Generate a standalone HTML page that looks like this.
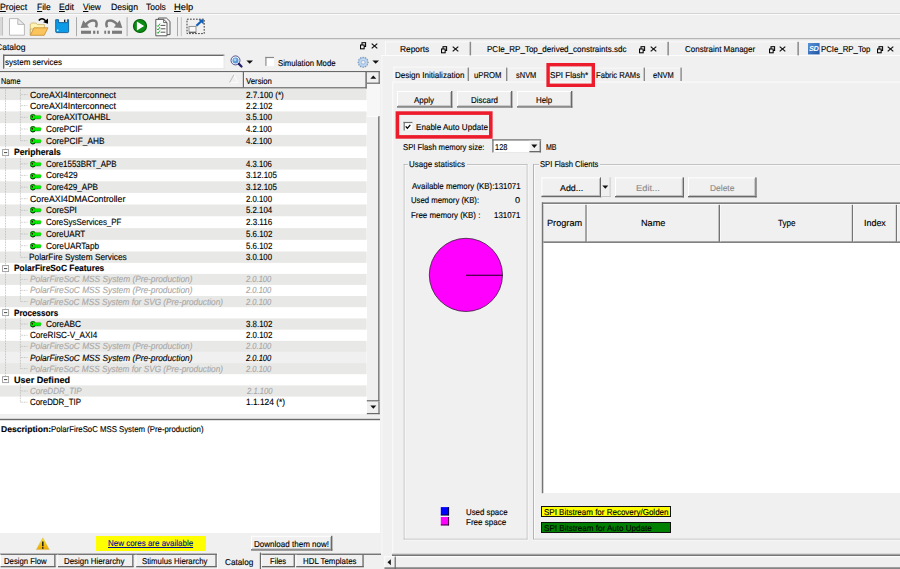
<!DOCTYPE html>
<html lang="en"><head><meta charset="utf-8"><title>Libero Catalog - SPI Flash</title>
<style>
html,body{margin:0;padding:0;}
body{width:900px;height:569px;overflow:hidden;background:#f0f0f0;position:relative;font-family:"Liberation Sans", sans-serif;}
div,span.t,svg{position:absolute;box-sizing:border-box;}
span.t{white-space:pre;display:block;text-rendering:geometricPrecision;-webkit-text-stroke:0.14px currentColor;}
u{text-decoration:underline;text-underline-offset:1px;text-decoration-thickness:1px;}
</style></head>
<body>
<span class="t" style="left:0.3px;top:0.7px;font-size:9.0px;line-height:12px;color:#000;transform:scaleX(0.9671);transform-origin:0 0;"><u>P</u>roject</span>
<span class="t" style="left:36.5px;top:0.7px;font-size:9.0px;line-height:12px;color:#000;transform:scaleX(0.9448);transform-origin:0 0;"><u>F</u>ile</span>
<span class="t" style="left:59.0px;top:0.7px;font-size:9.0px;line-height:12px;color:#000;transform:scaleX(0.9664);transform-origin:0 0;"><u>E</u>dit</span>
<span class="t" style="left:83.0px;top:0.7px;font-size:9.0px;line-height:12px;color:#000;transform:scaleX(0.9231);transform-origin:0 0;"><u>V</u>iew</span>
<span class="t" style="left:110.5px;top:0.7px;font-size:9.0px;line-height:12px;color:#000;transform:scaleX(0.9627);transform-origin:0 0;">Design</span>
<span class="t" style="left:146.3px;top:0.7px;font-size:9.0px;line-height:12px;color:#000;transform:scaleX(0.9398);transform-origin:0 0;">Tools</span>
<span class="t" style="left:174.25px;top:0.7px;font-size:9.0px;line-height:12px;color:#000;transform:scaleX(1.0372);transform-origin:0 0;"><u>H</u>elp</span>
<svg style="left:0;top:0" width="900" height="569"><rect x="0" y="13" width="900" height="1" fill="#d4d4d4"/><rect x="0" y="14" width="900" height="1" fill="#fbfbfb"/><rect x="0" y="38" width="900" height="1" fill="#b4b4b4"/><rect x="0" y="39" width="900" height="1" fill="#e2e2e2"/><rect x="0.6" y="17" width="0.8" height="18.6" fill="#b4b4b4"/><rect x="2" y="17" width="0.8" height="18.6" fill="#b4b4b4"/></svg>
<svg style="left:8.5px;top:17.5px;" width="17" height="18" viewBox="0 0 17 18"><path d="M0.5 0.6 H8.8 L15.4 6.4 V17.2 H0.5 Z" fill="#fff" stroke="#b2b2b2" stroke-width="0.9"/><path d="M8.8 0.6 V6.4 H15.4 Z" fill="#ededed" stroke="#b2b2b2" stroke-width="0.9" stroke-linejoin="round"/></svg>
<svg style="left:29px;top:16px;" width="21" height="21" viewBox="0 0 21 21"><path d="M1.3 19 V8 L2.6 7 H7 L8.4 8.6 H15.4 V13 H1.3 Z" fill="#fdf3b4" stroke="#cbb068" stroke-width="0.8"/>
<path d="M1.3 19.3 L5 11.8 H19 L15.2 19.3 Z" fill="#fcc45c" stroke="#c48a30" stroke-width="0.8" stroke-linejoin="round"/>
<path d="M9.8 4.6 Q12.8 0.8 16.6 4.8" fill="none" stroke="#000" stroke-width="1.6"/>
<path d="M19 2.6 V7.7 L14.2 6.3 Z" fill="#000"/></svg>
<svg style="left:55px;top:19.4px;" width="15" height="15" viewBox="0 0 15 15"><path d="M0.7 0.7 H3.6 V3.6 H12.4 V0.7 H13.6 V12.6 Q13.6 13.6 12.6 13.6 H1.7 Q0.7 13.6 0.7 12.6 Z" fill="#0c9be6" stroke="#0f5c98" stroke-width="0.9" stroke-linejoin="round"/>
<rect x="9" y="0.6" width="1.4" height="2.4" fill="#222"/>
<rect x="1.9" y="10.6" width="1.5" height="1.5" fill="#fff"/></svg>
<svg style="left:0;top:0" width="900" height="569"><rect x="76" y="17.2" width="1" height="19" fill="#aaaaaa"/></svg>
<svg style="left:80px;top:18px;" width="20" height="17" viewBox="0 0 20 17"><path d="M5.8 6.6 Q10 1.3 15.4 2.9 Q17.6 5 15.9 9.2" fill="none" stroke="#7a7a7a" stroke-width="2.5"/>
<path d="M0.7 9.9 L3.3 2.3 L9.2 9.6 Z" fill="#7a7a7a"/>
<rect x="1" y="12.7" width="10" height="3.1" fill="#7a7a7a"/><rect x="13.1" y="12.7" width="2.2" height="3.1" fill="#7a7a7a"/><rect x="16.9" y="12.7" width="1.8" height="3.1" fill="#7a7a7a"/></svg>
<svg style="left:102.6px;top:18px;transform:scaleX(-1)" width="20" height="17" viewBox="0 0 20 17"><path d="M5.8 6.6 Q10 1.3 15.4 2.9 Q17.6 5 15.9 9.2" fill="none" stroke="#7a7a7a" stroke-width="2.5"/>
<path d="M0.7 9.9 L3.3 2.3 L9.2 9.6 Z" fill="#7a7a7a"/>
<rect x="1" y="12.7" width="10" height="3.1" fill="#7a7a7a"/><rect x="13.1" y="12.7" width="2.2" height="3.1" fill="#7a7a7a"/><rect x="16.9" y="12.7" width="1.8" height="3.1" fill="#7a7a7a"/></svg>
<svg style="left:0;top:0" width="900" height="569"><rect x="126.6" y="17.2" width="1" height="19" fill="#aaaaaa"/></svg>
<svg style="left:132px;top:18.4px;" width="16" height="16" viewBox="0 0 16 16"><circle cx="8" cy="8" r="6.5" fill="#0c8c14" stroke="#056008" stroke-width="1.2"/><path d="M4.9 3.6 L12.1 8 L4.9 12.4 Z" fill="#fff"/></svg>
<svg style="left:154.6px;top:17px;" width="16" height="20" viewBox="0 0 16 20"><path d="M3.4 1 H11.4 L15 4.4 V17.6 H3.4 Z" fill="#f4f4f4" stroke="#4a4a4a" stroke-width="0.9"/>
<path d="M0.8 2.4 H8.6 L12 5.6 V18.8 H0.8 Z" fill="#fcfcfc" stroke="#4a4a4a" stroke-width="0.9"/>
<path d="M8.6 2.4 V5.6 H12" fill="none" stroke="#4a4a4a" stroke-width="0.8"/>
<path d="M5.6 8.4 H10.4 M5.6 11.8 H10.4 M5.6 15.2 H10.4" stroke="#555" stroke-width="1"/>
<path d="M2 8.4 L3 9.6 L5 6.6 M2 11.8 L3 13 L5 10 M2 15.2 L3 16.4 L5 13.4" fill="none" stroke="#22a832" stroke-width="1"/></svg>
<svg style="left:0;top:0" width="900" height="569"><rect x="177" y="17.2" width="1" height="19" fill="#aaaaaa"/><rect x="180.8" y="17.2" width="1" height="19" fill="#c4c4c4"/></svg>
<svg style="left:185.6px;top:18.4px;" width="20" height="17" viewBox="0 0 20 17"><rect x="1" y="1.2" width="17.2" height="14.4" fill="none" stroke="#3c3c3c" stroke-width="1" stroke-dasharray="1.7 1.3"/>
<rect x="3" y="8.4" width="7" height="5.8" fill="#f8f8f8" stroke="#8a8a8a" stroke-width="0.9"/><path d="M3 14.4 H10" stroke="#666" stroke-width="1.2"/>
<path d="M10.4 7.8 L15.8 2.8" stroke="#155fb6" stroke-width="2.2"/><path d="M12.4 1.6 H17.6 V6.6 Z" fill="#155fb6"/></svg>
<span class="t" style="left:-4.45px;top:41.4px;font-size:8.5px;line-height:12px;color:#000;transform:scaleX(1.0071);transform-origin:0 0;">Catalog</span>
<svg style="left:360.3px;top:42.2px;" width="7" height="8" viewBox="0 0 7 8"><rect x="2" y="0.7" width="3.6" height="3.8" fill="none" stroke="#000" stroke-width="1.05"/><rect x="0.55" y="3" width="3.6" height="3.8" fill="#f0f0f0" stroke="#000" stroke-width="1.05"/></svg>
<svg style="left:371.3px;top:42.6px;" width="8" height="7" viewBox="0 0 8 7"><path d="M0.7 0.6 L6.3 5.4 M6.3 0.6 L0.7 5.4" stroke="#111" stroke-width="1.25"/></svg>
<div style="left:3px;top:54.6px;width:221.4px;height:14.4px;background:#fff;"></div>
<svg style="left:0;top:0" width="900" height="569"><rect x="3" y="54.6" width="221.4" height="1.4" fill="#696969"/><rect x="3" y="54.6" width="1.4" height="14.4" fill="#696969"/><rect x="3.6" y="68.2" width="221" height="0.8" fill="#e4e4e4"/><rect x="223.6" y="55" width="0.8" height="14" fill="#e4e4e4"/></svg>
<span class="t" style="left:5.25px;top:56.4px;font-size:8.5px;line-height:12px;color:#000;transform:scaleX(0.9417);transform-origin:0 0;">system services</span>
<svg style="left:229.6px;top:55.4px;" width="14" height="14" viewBox="0 0 14 14"><circle cx="5.5" cy="5.4" r="4.5" fill="#f4f6fa" stroke="#2c2c78" stroke-width="0.8"/>
<circle cx="5.5" cy="5.4" r="3" fill="#5a9ad8"/><circle cx="5" cy="4.8" r="1.5" fill="#a8d0f0"/>
<path d="M8.9 8.9 L11.5 11.5" stroke="#20206c" stroke-width="2.3" stroke-linecap="round"/></svg>
<svg style="left:245.6px;top:60px;" width="8" height="5" viewBox="0 0 8 5"><path d="M0.4 0.4 H7 L3.7 3.8 Z" fill="#111"/></svg>
<div style="left:265.3px;top:56.9px;width:8.7px;height:9px;background:#fff;"></div>
<svg style="left:0;top:0" width="900" height="569"><rect x="265.3" y="56.9" width="8.7" height="1.2" fill="#8a8a8a"/><rect x="265.3" y="56.9" width="1.2" height="9" fill="#8a8a8a"/></svg>
<span class="t" style="left:277.75px;top:56.6px;font-size:8.5px;line-height:12px;color:#000;transform:scaleX(0.9076);transform-origin:0 0;">Simulation Mode</span>
<svg style="left:356.6px;top:56px;" width="13" height="13" viewBox="0 0 13 13"><circle cx="6.15" cy="6.25" r="5.7" fill="#e9e4d6"/>
<circle cx="6.15" cy="6.25" r="5.0" fill="#a6c3e6"/><circle cx="11.15" cy="6.25" r="0.62" fill="#5c8cc4"/><circle cx="10.48" cy="8.75" r="0.62" fill="#5c8cc4"/><circle cx="8.65" cy="10.58" r="0.62" fill="#5c8cc4"/><circle cx="6.15" cy="11.25" r="0.62" fill="#5c8cc4"/><circle cx="3.65" cy="10.58" r="0.62" fill="#5c8cc4"/><circle cx="1.82" cy="8.75" r="0.62" fill="#5c8cc4"/><circle cx="1.15" cy="6.25" r="0.62" fill="#5c8cc4"/><circle cx="1.82" cy="3.75" r="0.62" fill="#5c8cc4"/><circle cx="3.65" cy="1.92" r="0.62" fill="#5c8cc4"/><circle cx="6.15" cy="1.25" r="0.62" fill="#5c8cc4"/><circle cx="8.65" cy="1.92" r="0.62" fill="#5c8cc4"/><circle cx="10.48" cy="3.75" r="0.62" fill="#5c8cc4"/>
<circle cx="6.15" cy="6.25" r="3.2" fill="none" stroke="#c6daf0" stroke-width="1.2"/>
<circle cx="6.15" cy="6.25" r="1.7" fill="#f6f4ee" stroke="#88aad6" stroke-width="0.5"/></svg>
<svg style="left:372.2px;top:59.8px;" width="8" height="5" viewBox="0 0 8 5"><path d="M0.4 0.4 H7 L3.7 3.8 Z" fill="#111"/></svg>
<svg style="left:0;top:0" width="900" height="569"><rect x="0" y="71" width="366.6" height="1.4" fill="#696969"/><rect x="0" y="87.2" width="366.6" height="1.4" fill="#696969"/><rect x="242.8" y="71.6" width="1.4" height="16" fill="#696969"/><rect x="365.4" y="71" width="1.4" height="17.6" fill="#696969"/><rect x="0" y="72.4" width="242.6" height="0.8" fill="#fff"/><rect x="244.2" y="72.4" width="121" height="0.8" fill="#fff"/><rect x="244.2" y="72.4" width="0.8" height="14.6" fill="#fff"/></svg>
<span class="t" style="left:0.8px;top:74.6px;font-size:8.5px;line-height:12px;color:#000;transform:scaleX(0.8569);transform-origin:0 0;">Name</span>
<span class="t" style="left:246.4px;top:74.6px;font-size:8.5px;line-height:12px;color:#000;transform:scaleX(0.9125);transform-origin:0 0;">Version</span>
<svg style="left:229px;top:74.4px;" width="10" height="9.6" viewBox="0 0 10 9.6"><path d="M4.8 0.8 L9 8.6 H0.6" fill="none" stroke="#fdfdfd" stroke-width="0.9"/><path d="M0.6 8.6 L4.8 0.8" fill="none" stroke="#b4b4b4" stroke-width="0.9"/></svg>
<div style="left:0px;top:88.6px;width:366.6px;height:325.6px;background:#fff;"></div>
<svg style="left:0;top:0" width="367" height="420"><rect x="0" y="88.60" width="366.6" height="11.50" fill="#e8e8e6"/></svg>
<svg style="left:0;top:0" width="367" height="420"><rect x="0" y="111.45" width="366.6" height="11.70" fill="#e8e8e6"/></svg>
<svg style="left:0;top:0" width="367" height="420"><rect x="0" y="134.85" width="366.6" height="11.60" fill="#e8e8e6"/></svg>
<svg style="left:0;top:0" width="367" height="420"><rect x="0" y="158.00" width="366.6" height="11.60" fill="#e8e8e6"/></svg>
<svg style="left:0;top:0" width="367" height="420"><rect x="0" y="181.30" width="366.6" height="11.65" fill="#e8e8e6"/></svg>
<svg style="left:0;top:0" width="367" height="420"><rect x="0" y="204.50" width="366.6" height="11.75" fill="#e8e8e6"/></svg>
<svg style="left:0;top:0" width="367" height="420"><rect x="0" y="228.10" width="366.6" height="11.75" fill="#e8e8e6"/></svg>
<svg style="left:0;top:0" width="367" height="420"><rect x="0" y="251.50" width="366.6" height="11.35" fill="#e8e8e6"/></svg>
<svg style="left:0;top:0" width="367" height="420"><rect x="0" y="273.90" width="366.6" height="11.00" fill="#e8e8e6"/></svg>
<svg style="left:0;top:0" width="367" height="420"><rect x="0" y="296.00" width="366.6" height="11.20" fill="#e8e8e6"/></svg>
<svg style="left:0;top:0" width="367" height="420"><rect x="0" y="318.40" width="366.6" height="11.25" fill="#e8e8e6"/></svg>
<svg style="left:0;top:0" width="367" height="420"><rect x="0" y="340.85" width="366.6" height="11.10" fill="#e8e8e6"/></svg>
<svg style="left:0;top:0" width="367" height="420"><rect x="0" y="351.95" width="366.6" height="11.10" fill="#f0f0f0"/></svg>
<svg style="left:0;top:0" width="367" height="420"><rect x="0" y="363.05" width="366.6" height="11.15" fill="#e8e8e6"/></svg>
<svg style="left:0;top:0" width="367" height="420"><rect x="0" y="385.40" width="366.6" height="11.20" fill="#e8e8e6"/></svg>
<svg style="left:0;top:0" width="367" height="420"><path d="M5.5 88.6 V376.5" stroke="#b0b0b0" stroke-width="0.8" stroke-dasharray="0.8 0.8"/></svg>
<svg style="left:0;top:0" width="367" height="420"><path d="M20.4 88.6 V140.7" stroke="#b0b0b0" stroke-width="0.8" stroke-dasharray="0.8 0.8"/></svg>
<svg style="left:0;top:0" width="367" height="420"><path d="M20.4 156.2 V257.3" stroke="#b0b0b0" stroke-width="0.8" stroke-dasharray="0.8 0.8"/></svg>
<svg style="left:0;top:0" width="367" height="420"><path d="M20.4 272.4 V301.6" stroke="#b0b0b0" stroke-width="0.8" stroke-dasharray="0.8 0.8"/></svg>
<svg style="left:0;top:0" width="367" height="420"><path d="M20.4 316.8 V368.6" stroke="#b0b0b0" stroke-width="0.8" stroke-dasharray="0.8 0.8"/></svg>
<svg style="left:0;top:0" width="367" height="420"><path d="M20.4 383.8 V402.2" stroke="#b0b0b0" stroke-width="0.8" stroke-dasharray="0.8 0.8"/></svg>
<svg style="left:0;top:0" width="367" height="420"><path d="M20.8 94.6 H27.6" stroke="#b0b0b0" stroke-width="0.8" stroke-dasharray="0.8 0.8"/></svg>
<svg style="left:0;top:0" width="367" height="420"><path d="M20.8 105.6 H27.6" stroke="#b0b0b0" stroke-width="0.8" stroke-dasharray="0.8 0.8"/></svg>
<svg style="left:0;top:0" width="367" height="420"><path d="M20.8 117.3 H27.6" stroke="#b0b0b0" stroke-width="0.8" stroke-dasharray="0.8 0.8"/></svg>
<svg style="left:0;top:0" width="367" height="420"><path d="M20.8 129.0 H27.6" stroke="#b0b0b0" stroke-width="0.8" stroke-dasharray="0.8 0.8"/></svg>
<svg style="left:0;top:0" width="367" height="420"><path d="M20.8 140.7 H27.6" stroke="#b0b0b0" stroke-width="0.8" stroke-dasharray="0.8 0.8"/></svg>
<svg style="left:0;top:0" width="367" height="420"><path d="M20.8 163.8 H27.6" stroke="#b0b0b0" stroke-width="0.8" stroke-dasharray="0.8 0.8"/></svg>
<svg style="left:0;top:0" width="367" height="420"><path d="M20.8 175.4 H27.6" stroke="#b0b0b0" stroke-width="0.8" stroke-dasharray="0.8 0.8"/></svg>
<svg style="left:0;top:0" width="367" height="420"><path d="M20.8 187.2 H27.6" stroke="#b0b0b0" stroke-width="0.8" stroke-dasharray="0.8 0.8"/></svg>
<svg style="left:0;top:0" width="367" height="420"><path d="M20.8 198.7 H27.6" stroke="#b0b0b0" stroke-width="0.8" stroke-dasharray="0.8 0.8"/></svg>
<svg style="left:0;top:0" width="367" height="420"><path d="M20.8 210.3 H27.6" stroke="#b0b0b0" stroke-width="0.8" stroke-dasharray="0.8 0.8"/></svg>
<svg style="left:0;top:0" width="367" height="420"><path d="M20.8 222.2 H27.6" stroke="#b0b0b0" stroke-width="0.8" stroke-dasharray="0.8 0.8"/></svg>
<svg style="left:0;top:0" width="367" height="420"><path d="M20.8 234.0 H27.6" stroke="#b0b0b0" stroke-width="0.8" stroke-dasharray="0.8 0.8"/></svg>
<svg style="left:0;top:0" width="367" height="420"><path d="M20.8 245.7 H27.6" stroke="#b0b0b0" stroke-width="0.8" stroke-dasharray="0.8 0.8"/></svg>
<svg style="left:0;top:0" width="367" height="420"><path d="M20.8 257.3 H27.6" stroke="#b0b0b0" stroke-width="0.8" stroke-dasharray="0.8 0.8"/></svg>
<svg style="left:0;top:0" width="367" height="420"><path d="M20.8 279.4 H27.6" stroke="#b0b0b0" stroke-width="0.8" stroke-dasharray="0.8 0.8"/></svg>
<svg style="left:0;top:0" width="367" height="420"><path d="M20.8 290.4 H27.6" stroke="#b0b0b0" stroke-width="0.8" stroke-dasharray="0.8 0.8"/></svg>
<svg style="left:0;top:0" width="367" height="420"><path d="M20.8 301.6 H27.6" stroke="#b0b0b0" stroke-width="0.8" stroke-dasharray="0.8 0.8"/></svg>
<svg style="left:0;top:0" width="367" height="420"><path d="M20.8 324.0 H27.6" stroke="#b0b0b0" stroke-width="0.8" stroke-dasharray="0.8 0.8"/></svg>
<svg style="left:0;top:0" width="367" height="420"><path d="M20.8 335.3 H27.6" stroke="#b0b0b0" stroke-width="0.8" stroke-dasharray="0.8 0.8"/></svg>
<svg style="left:0;top:0" width="367" height="420"><path d="M20.8 346.4 H27.6" stroke="#b0b0b0" stroke-width="0.8" stroke-dasharray="0.8 0.8"/></svg>
<svg style="left:0;top:0" width="367" height="420"><path d="M20.8 357.5 H27.6" stroke="#b0b0b0" stroke-width="0.8" stroke-dasharray="0.8 0.8"/></svg>
<svg style="left:0;top:0" width="367" height="420"><path d="M20.8 368.6 H27.6" stroke="#b0b0b0" stroke-width="0.8" stroke-dasharray="0.8 0.8"/></svg>
<svg style="left:0;top:0" width="367" height="420"><path d="M20.8 391.0 H27.6" stroke="#b0b0b0" stroke-width="0.8" stroke-dasharray="0.8 0.8"/></svg>
<svg style="left:0;top:0" width="367" height="420"><path d="M20.8 402.2 H27.6" stroke="#b0b0b0" stroke-width="0.8" stroke-dasharray="0.8 0.8"/></svg>
<span class="t" style="left:29.65px;top:88.6px;font-size:9.0px;line-height:12px;color:#000;transform:scaleX(0.9701);transform-origin:0 0;">CoreAXI4Interconnect</span>
<span class="t" style="left:246.05px;top:88.6px;font-size:9.0px;line-height:12px;color:#000;transform:scaleX(0.8994);transform-origin:0 0;">2.7.100 (*)</span>
<span class="t" style="left:29.65px;top:99.6px;font-size:9.0px;line-height:12px;color:#000;transform:scaleX(0.9701);transform-origin:0 0;">CoreAXI4Interconnect</span>
<span class="t" style="left:246.05px;top:99.6px;font-size:9.0px;line-height:12px;color:#000;transform:scaleX(0.8763);transform-origin:0 0;">2.2.102</span>
<svg style="left:30.2px;top:114.39999999999999px;" width="12" height="7" viewBox="0 0 12 7"><ellipse cx="2.9" cy="3.15" rx="2.75" ry="2.95" fill="#00ee00" stroke="#0c3c0c" stroke-width="0.45"/>
<path d="M0.8 4.9 Q2.9 7 5 5" fill="none" stroke="#061806" stroke-width="0.8"/>
<path d="M0.9 1.6 Q2.6 -0.2 4.6 1.2" fill="none" stroke="#0a2a0a" stroke-width="0.6"/>
<rect x="5.3" y="4" width="5.4" height="1.2" fill="#4a2060" opacity="0.75"/>
<path d="M5 1.5 H10.7 L11.5 3 L10.7 4.2 H5 Z" fill="#00ee00"/>
<rect x="5.9" y="4" width="1" height="1.1" fill="#00ee00"/><rect x="7.7" y="4" width="1" height="1.1" fill="#00ee00"/><rect x="9.4" y="4" width="0.9" height="1" fill="#00ee00"/>
<path d="M5.2 1.35 H10.4" stroke="#8a7a30" stroke-width="0.4"/>
<ellipse cx="2.3" cy="2.7" rx="0.8" ry="1.05" fill="#401010"/></svg>
<span class="t" style="left:45.85px;top:111.3px;font-size:9.0px;line-height:12px;color:#000;transform:scaleX(0.9201);transform-origin:0 0;">CoreAXITOAHBL</span>
<span class="t" style="left:246.05px;top:111.3px;font-size:9.0px;line-height:12px;color:#000;transform:scaleX(0.8678);transform-origin:0 0;">3.5.100</span>
<svg style="left:30.2px;top:126.1px;" width="12" height="7" viewBox="0 0 12 7"><ellipse cx="2.9" cy="3.15" rx="2.75" ry="2.95" fill="#00ee00" stroke="#0c3c0c" stroke-width="0.45"/>
<path d="M0.8 4.9 Q2.9 7 5 5" fill="none" stroke="#061806" stroke-width="0.8"/>
<path d="M0.9 1.6 Q2.6 -0.2 4.6 1.2" fill="none" stroke="#0a2a0a" stroke-width="0.6"/>
<rect x="5.3" y="4" width="5.4" height="1.2" fill="#4a2060" opacity="0.75"/>
<path d="M5 1.5 H10.7 L11.5 3 L10.7 4.2 H5 Z" fill="#00ee00"/>
<rect x="5.9" y="4" width="1" height="1.1" fill="#00ee00"/><rect x="7.7" y="4" width="1" height="1.1" fill="#00ee00"/><rect x="9.4" y="4" width="0.9" height="1" fill="#00ee00"/>
<path d="M5.2 1.35 H10.4" stroke="#8a7a30" stroke-width="0.4"/>
<ellipse cx="2.3" cy="2.7" rx="0.8" ry="1.05" fill="#401010"/></svg>
<span class="t" style="left:45.85px;top:123.0px;font-size:9.0px;line-height:12px;color:#000;transform:scaleX(0.9101);transform-origin:0 0;">CorePCIF</span>
<span class="t" style="left:246.3px;top:123.0px;font-size:9.0px;line-height:12px;color:#000;transform:scaleX(0.8605);transform-origin:0 0;">4.2.100</span>
<svg style="left:30.2px;top:137.79999999999998px;" width="12" height="7" viewBox="0 0 12 7"><ellipse cx="2.9" cy="3.15" rx="2.75" ry="2.95" fill="#00ee00" stroke="#0c3c0c" stroke-width="0.45"/>
<path d="M0.8 4.9 Q2.9 7 5 5" fill="none" stroke="#061806" stroke-width="0.8"/>
<path d="M0.9 1.6 Q2.6 -0.2 4.6 1.2" fill="none" stroke="#0a2a0a" stroke-width="0.6"/>
<rect x="5.3" y="4" width="5.4" height="1.2" fill="#4a2060" opacity="0.75"/>
<path d="M5 1.5 H10.7 L11.5 3 L10.7 4.2 H5 Z" fill="#00ee00"/>
<rect x="5.9" y="4" width="1" height="1.1" fill="#00ee00"/><rect x="7.7" y="4" width="1" height="1.1" fill="#00ee00"/><rect x="9.4" y="4" width="0.9" height="1" fill="#00ee00"/>
<path d="M5.2 1.35 H10.4" stroke="#8a7a30" stroke-width="0.4"/>
<ellipse cx="2.3" cy="2.7" rx="0.8" ry="1.05" fill="#401010"/></svg>
<span class="t" style="left:45.85px;top:134.7px;font-size:9.0px;line-height:12px;color:#000;transform:scaleX(0.9198);transform-origin:0 0;">CorePCIF_AHB</span>
<span class="t" style="left:246.3px;top:134.7px;font-size:9.0px;line-height:12px;color:#000;transform:scaleX(0.8605);transform-origin:0 0;">4.2.100</span>
<svg style="left:2px;top:148.79999999999998px;" width="8" height="8" viewBox="0 0 8 8"><rect x="0.6" y="0.6" width="6" height="6" fill="#fff" stroke="#9a9a9a" stroke-width="0.9"/><path d="M2 3.6 H5.2" stroke="#333" stroke-width="0.9"/></svg>
<span class="t" style="left:14.3px;top:146.2px;font-size:9.0px;line-height:12px;color:#000;font-weight:bold;transform:scaleX(0.9544);transform-origin:0 0;">Peripherals</span>
<svg style="left:30.2px;top:160.9px;" width="12" height="7" viewBox="0 0 12 7"><ellipse cx="2.9" cy="3.15" rx="2.75" ry="2.95" fill="#00ee00" stroke="#0c3c0c" stroke-width="0.45"/>
<path d="M0.8 4.9 Q2.9 7 5 5" fill="none" stroke="#061806" stroke-width="0.8"/>
<path d="M0.9 1.6 Q2.6 -0.2 4.6 1.2" fill="none" stroke="#0a2a0a" stroke-width="0.6"/>
<rect x="5.3" y="4" width="5.4" height="1.2" fill="#4a2060" opacity="0.75"/>
<path d="M5 1.5 H10.7 L11.5 3 L10.7 4.2 H5 Z" fill="#00ee00"/>
<rect x="5.9" y="4" width="1" height="1.1" fill="#00ee00"/><rect x="7.7" y="4" width="1" height="1.1" fill="#00ee00"/><rect x="9.4" y="4" width="0.9" height="1" fill="#00ee00"/>
<path d="M5.2 1.35 H10.4" stroke="#8a7a30" stroke-width="0.4"/>
<ellipse cx="2.3" cy="2.7" rx="0.8" ry="1.05" fill="#401010"/></svg>
<span class="t" style="left:45.85px;top:157.8px;font-size:9.0px;line-height:12px;color:#000;transform:scaleX(0.8777);transform-origin:0 0;">Core1553BRT_APB</span>
<span class="t" style="left:246.3px;top:157.8px;font-size:9.0px;line-height:12px;color:#000;transform:scaleX(0.8605);transform-origin:0 0;">4.3.106</span>
<svg style="left:30.2px;top:172.5px;" width="12" height="7" viewBox="0 0 12 7"><ellipse cx="2.9" cy="3.15" rx="2.75" ry="2.95" fill="#00ee00" stroke="#0c3c0c" stroke-width="0.45"/>
<path d="M0.8 4.9 Q2.9 7 5 5" fill="none" stroke="#061806" stroke-width="0.8"/>
<path d="M0.9 1.6 Q2.6 -0.2 4.6 1.2" fill="none" stroke="#0a2a0a" stroke-width="0.6"/>
<rect x="5.3" y="4" width="5.4" height="1.2" fill="#4a2060" opacity="0.75"/>
<path d="M5 1.5 H10.7 L11.5 3 L10.7 4.2 H5 Z" fill="#00ee00"/>
<rect x="5.9" y="4" width="1" height="1.1" fill="#00ee00"/><rect x="7.7" y="4" width="1" height="1.1" fill="#00ee00"/><rect x="9.4" y="4" width="0.9" height="1" fill="#00ee00"/>
<path d="M5.2 1.35 H10.4" stroke="#8a7a30" stroke-width="0.4"/>
<ellipse cx="2.3" cy="2.7" rx="0.8" ry="1.05" fill="#401010"/></svg>
<span class="t" style="left:45.85px;top:169.4px;font-size:9.0px;line-height:12px;color:#000;transform:scaleX(0.9147);transform-origin:0 0;">Core429</span>
<span class="t" style="left:246.05px;top:169.4px;font-size:9.0px;line-height:12px;color:#000;transform:scaleX(0.8826);transform-origin:0 0;">3.12.105</span>
<svg style="left:30.2px;top:184.29999999999998px;" width="12" height="7" viewBox="0 0 12 7"><ellipse cx="2.9" cy="3.15" rx="2.75" ry="2.95" fill="#00ee00" stroke="#0c3c0c" stroke-width="0.45"/>
<path d="M0.8 4.9 Q2.9 7 5 5" fill="none" stroke="#061806" stroke-width="0.8"/>
<path d="M0.9 1.6 Q2.6 -0.2 4.6 1.2" fill="none" stroke="#0a2a0a" stroke-width="0.6"/>
<rect x="5.3" y="4" width="5.4" height="1.2" fill="#4a2060" opacity="0.75"/>
<path d="M5 1.5 H10.7 L11.5 3 L10.7 4.2 H5 Z" fill="#00ee00"/>
<rect x="5.9" y="4" width="1" height="1.1" fill="#00ee00"/><rect x="7.7" y="4" width="1" height="1.1" fill="#00ee00"/><rect x="9.4" y="4" width="0.9" height="1" fill="#00ee00"/>
<path d="M5.2 1.35 H10.4" stroke="#8a7a30" stroke-width="0.4"/>
<ellipse cx="2.3" cy="2.7" rx="0.8" ry="1.05" fill="#401010"/></svg>
<span class="t" style="left:45.85px;top:181.2px;font-size:9.0px;line-height:12px;color:#000;transform:scaleX(0.9044);transform-origin:0 0;">Core429_APB</span>
<span class="t" style="left:246.05px;top:181.2px;font-size:9.0px;line-height:12px;color:#000;transform:scaleX(0.8826);transform-origin:0 0;">3.12.105</span>
<span class="t" style="left:29.65px;top:192.7px;font-size:9.0px;line-height:12px;color:#000;transform:scaleX(0.9724);transform-origin:0 0;">CoreAXI4DMAController</span>
<span class="t" style="left:246.05px;top:192.7px;font-size:9.0px;line-height:12px;color:#000;transform:scaleX(0.8678);transform-origin:0 0;">2.0.100</span>
<svg style="left:30.2px;top:207.4px;" width="12" height="7" viewBox="0 0 12 7"><ellipse cx="2.9" cy="3.15" rx="2.75" ry="2.95" fill="#00ee00" stroke="#0c3c0c" stroke-width="0.45"/>
<path d="M0.8 4.9 Q2.9 7 5 5" fill="none" stroke="#061806" stroke-width="0.8"/>
<path d="M0.9 1.6 Q2.6 -0.2 4.6 1.2" fill="none" stroke="#0a2a0a" stroke-width="0.6"/>
<rect x="5.3" y="4" width="5.4" height="1.2" fill="#4a2060" opacity="0.75"/>
<path d="M5 1.5 H10.7 L11.5 3 L10.7 4.2 H5 Z" fill="#00ee00"/>
<rect x="5.9" y="4" width="1" height="1.1" fill="#00ee00"/><rect x="7.7" y="4" width="1" height="1.1" fill="#00ee00"/><rect x="9.4" y="4" width="0.9" height="1" fill="#00ee00"/>
<path d="M5.2 1.35 H10.4" stroke="#8a7a30" stroke-width="0.4"/>
<ellipse cx="2.3" cy="2.7" rx="0.8" ry="1.05" fill="#401010"/></svg>
<span class="t" style="left:45.85px;top:204.3px;font-size:9.0px;line-height:12px;color:#000;transform:scaleX(0.9076);transform-origin:0 0;">CoreSPI</span>
<span class="t" style="left:246.05px;top:204.3px;font-size:9.0px;line-height:12px;color:#000;transform:scaleX(0.8690);transform-origin:0 0;">5.2.104</span>
<svg style="left:30.2px;top:219.29999999999998px;" width="12" height="7" viewBox="0 0 12 7"><ellipse cx="2.9" cy="3.15" rx="2.75" ry="2.95" fill="#00ee00" stroke="#0c3c0c" stroke-width="0.45"/>
<path d="M0.8 4.9 Q2.9 7 5 5" fill="none" stroke="#061806" stroke-width="0.8"/>
<path d="M0.9 1.6 Q2.6 -0.2 4.6 1.2" fill="none" stroke="#0a2a0a" stroke-width="0.6"/>
<rect x="5.3" y="4" width="5.4" height="1.2" fill="#4a2060" opacity="0.75"/>
<path d="M5 1.5 H10.7 L11.5 3 L10.7 4.2 H5 Z" fill="#00ee00"/>
<rect x="5.9" y="4" width="1" height="1.1" fill="#00ee00"/><rect x="7.7" y="4" width="1" height="1.1" fill="#00ee00"/><rect x="9.4" y="4" width="0.9" height="1" fill="#00ee00"/>
<path d="M5.2 1.35 H10.4" stroke="#8a7a30" stroke-width="0.4"/>
<ellipse cx="2.3" cy="2.7" rx="0.8" ry="1.05" fill="#401010"/></svg>
<span class="t" style="left:45.85px;top:216.2px;font-size:9.0px;line-height:12px;color:#000;transform:scaleX(0.8818);transform-origin:0 0;">CoreSysServices_PF</span>
<span class="t" style="left:246.05px;top:216.2px;font-size:9.0px;line-height:12px;color:#000;transform:scaleX(0.8904);transform-origin:0 0;">2.3.116</span>
<svg style="left:30.2px;top:231.1px;" width="12" height="7" viewBox="0 0 12 7"><ellipse cx="2.9" cy="3.15" rx="2.75" ry="2.95" fill="#00ee00" stroke="#0c3c0c" stroke-width="0.45"/>
<path d="M0.8 4.9 Q2.9 7 5 5" fill="none" stroke="#061806" stroke-width="0.8"/>
<path d="M0.9 1.6 Q2.6 -0.2 4.6 1.2" fill="none" stroke="#0a2a0a" stroke-width="0.6"/>
<rect x="5.3" y="4" width="5.4" height="1.2" fill="#4a2060" opacity="0.75"/>
<path d="M5 1.5 H10.7 L11.5 3 L10.7 4.2 H5 Z" fill="#00ee00"/>
<rect x="5.9" y="4" width="1" height="1.1" fill="#00ee00"/><rect x="7.7" y="4" width="1" height="1.1" fill="#00ee00"/><rect x="9.4" y="4" width="0.9" height="1" fill="#00ee00"/>
<path d="M5.2 1.35 H10.4" stroke="#8a7a30" stroke-width="0.4"/>
<ellipse cx="2.3" cy="2.7" rx="0.8" ry="1.05" fill="#401010"/></svg>
<span class="t" style="left:45.85px;top:228.0px;font-size:9.0px;line-height:12px;color:#000;transform:scaleX(0.8954);transform-origin:0 0;">CoreUART</span>
<span class="t" style="left:246.05px;top:228.0px;font-size:9.0px;line-height:12px;color:#000;transform:scaleX(0.8763);transform-origin:0 0;">5.6.102</span>
<svg style="left:30.2px;top:242.79999999999998px;" width="12" height="7" viewBox="0 0 12 7"><ellipse cx="2.9" cy="3.15" rx="2.75" ry="2.95" fill="#00ee00" stroke="#0c3c0c" stroke-width="0.45"/>
<path d="M0.8 4.9 Q2.9 7 5 5" fill="none" stroke="#061806" stroke-width="0.8"/>
<path d="M0.9 1.6 Q2.6 -0.2 4.6 1.2" fill="none" stroke="#0a2a0a" stroke-width="0.6"/>
<rect x="5.3" y="4" width="5.4" height="1.2" fill="#4a2060" opacity="0.75"/>
<path d="M5 1.5 H10.7 L11.5 3 L10.7 4.2 H5 Z" fill="#00ee00"/>
<rect x="5.9" y="4" width="1" height="1.1" fill="#00ee00"/><rect x="7.7" y="4" width="1" height="1.1" fill="#00ee00"/><rect x="9.4" y="4" width="0.9" height="1" fill="#00ee00"/>
<path d="M5.2 1.35 H10.4" stroke="#8a7a30" stroke-width="0.4"/>
<ellipse cx="2.3" cy="2.7" rx="0.8" ry="1.05" fill="#401010"/></svg>
<span class="t" style="left:45.85px;top:239.7px;font-size:9.0px;line-height:12px;color:#000;transform:scaleX(0.9183);transform-origin:0 0;">CoreUARTapb</span>
<span class="t" style="left:246.05px;top:239.7px;font-size:9.0px;line-height:12px;color:#000;transform:scaleX(0.8763);transform-origin:0 0;">5.6.102</span>
<span class="t" style="left:29.4px;top:251.3px;font-size:9.0px;line-height:12px;color:#000;transform:scaleX(0.9219);transform-origin:0 0;">PolarFire System Services</span>
<span class="t" style="left:246.05px;top:251.3px;font-size:9.0px;line-height:12px;color:#000;transform:scaleX(0.8678);transform-origin:0 0;">3.0.100</span>
<svg style="left:2px;top:265.0px;" width="8" height="8" viewBox="0 0 8 8"><rect x="0.6" y="0.6" width="6" height="6" fill="#fff" stroke="#9a9a9a" stroke-width="0.9"/><path d="M2 3.6 H5.2" stroke="#333" stroke-width="0.9"/></svg>
<span class="t" style="left:14.3px;top:262.4px;font-size:9.0px;line-height:12px;color:#000;font-weight:bold;transform:scaleX(0.9299);transform-origin:0 0;">PolarFireSoC Features</span>
<span class="t" style="left:29.65px;top:273.4px;font-size:9.0px;line-height:12px;color:#a8a8a8;font-style:italic;transform:scaleX(0.9225);transform-origin:0 0;">PolarFireSoC MSS System (Pre-production)</span>
<span class="t" style="left:246.3px;top:273.4px;font-size:9.0px;line-height:12px;color:#a8a8a8;font-style:italic;transform:scaleX(0.8413);transform-origin:0 0;">2.0.100</span>
<span class="t" style="left:29.65px;top:284.4px;font-size:9.0px;line-height:12px;color:#a8a8a8;font-style:italic;transform:scaleX(0.9225);transform-origin:0 0;">PolarFireSoC MSS System (Pre-production)</span>
<span class="t" style="left:246.3px;top:284.4px;font-size:9.0px;line-height:12px;color:#a8a8a8;font-style:italic;transform:scaleX(0.8413);transform-origin:0 0;">2.0.100</span>
<span class="t" style="left:29.65px;top:295.6px;font-size:9.0px;line-height:12px;color:#a8a8a8;font-style:italic;transform:scaleX(0.9164);transform-origin:0 0;">PolarFireSoC MSS System for SVG (Pre-production)</span>
<span class="t" style="left:246.3px;top:295.6px;font-size:9.0px;line-height:12px;color:#a8a8a8;font-style:italic;transform:scaleX(0.8413);transform-origin:0 0;">2.0.100</span>
<svg style="left:2px;top:309.40000000000003px;" width="8" height="8" viewBox="0 0 8 8"><rect x="0.6" y="0.6" width="6" height="6" fill="#fff" stroke="#9a9a9a" stroke-width="0.9"/><path d="M2 3.6 H5.2" stroke="#333" stroke-width="0.9"/></svg>
<span class="t" style="left:14.3px;top:306.8px;font-size:9.0px;line-height:12px;color:#000;font-weight:bold;transform:scaleX(0.9016);transform-origin:0 0;">Processors</span>
<svg style="left:30.2px;top:321.1px;" width="12" height="7" viewBox="0 0 12 7"><ellipse cx="2.9" cy="3.15" rx="2.75" ry="2.95" fill="#00ee00" stroke="#0c3c0c" stroke-width="0.45"/>
<path d="M0.8 4.9 Q2.9 7 5 5" fill="none" stroke="#061806" stroke-width="0.8"/>
<path d="M0.9 1.6 Q2.6 -0.2 4.6 1.2" fill="none" stroke="#0a2a0a" stroke-width="0.6"/>
<rect x="5.3" y="4" width="5.4" height="1.2" fill="#4a2060" opacity="0.75"/>
<path d="M5 1.5 H10.7 L11.5 3 L10.7 4.2 H5 Z" fill="#00ee00"/>
<rect x="5.9" y="4" width="1" height="1.1" fill="#00ee00"/><rect x="7.7" y="4" width="1" height="1.1" fill="#00ee00"/><rect x="9.4" y="4" width="0.9" height="1" fill="#00ee00"/>
<path d="M5.2 1.35 H10.4" stroke="#8a7a30" stroke-width="0.4"/>
<ellipse cx="2.3" cy="2.7" rx="0.8" ry="1.05" fill="#401010"/></svg>
<span class="t" style="left:45.85px;top:318.0px;font-size:9.0px;line-height:12px;color:#000;transform:scaleX(0.9213);transform-origin:0 0;">CoreABC</span>
<span class="t" style="left:246.05px;top:318.0px;font-size:9.0px;line-height:12px;color:#000;transform:scaleX(0.8763);transform-origin:0 0;">3.8.102</span>
<span class="t" style="left:29.65px;top:329.3px;font-size:9.0px;line-height:12px;color:#000;transform:scaleX(0.9010);transform-origin:0 0;">CoreRISC-V_AXI4</span>
<span class="t" style="left:246.05px;top:329.3px;font-size:9.0px;line-height:12px;color:#000;transform:scaleX(0.8763);transform-origin:0 0;">2.0.102</span>
<span class="t" style="left:29.65px;top:340.4px;font-size:9.0px;line-height:12px;color:#a8a8a8;font-style:italic;transform:scaleX(0.9225);transform-origin:0 0;">PolarFireSoC MSS System (Pre-production)</span>
<span class="t" style="left:246.3px;top:340.4px;font-size:9.0px;line-height:12px;color:#a8a8a8;font-style:italic;transform:scaleX(0.8413);transform-origin:0 0;">2.0.100</span>
<span class="t" style="left:29.65px;top:351.5px;font-size:9.0px;line-height:12px;color:#000;font-style:italic;transform:scaleX(0.9225);transform-origin:0 0;">PolarFireSoC MSS System (Pre-production)</span>
<span class="t" style="left:246.3px;top:351.5px;font-size:9.0px;line-height:12px;color:#000;font-style:italic;transform:scaleX(0.8413);transform-origin:0 0;">2.0.100</span>
<span class="t" style="left:29.65px;top:362.6px;font-size:9.0px;line-height:12px;color:#a8a8a8;font-style:italic;transform:scaleX(0.9164);transform-origin:0 0;">PolarFireSoC MSS System for SVG (Pre-production)</span>
<span class="t" style="left:246.3px;top:362.6px;font-size:9.0px;line-height:12px;color:#a8a8a8;font-style:italic;transform:scaleX(0.8413);transform-origin:0 0;">2.0.100</span>
<svg style="left:2px;top:376.40000000000003px;" width="8" height="8" viewBox="0 0 8 8"><rect x="0.6" y="0.6" width="6" height="6" fill="#fff" stroke="#9a9a9a" stroke-width="0.9"/><path d="M2 3.6 H5.2" stroke="#333" stroke-width="0.9"/></svg>
<span class="t" style="left:14.3px;top:373.8px;font-size:9.0px;line-height:12px;color:#000;font-weight:bold;transform:scaleX(1.0092);transform-origin:0 0;">User Defined</span>
<span class="t" style="left:29.65px;top:385.0px;font-size:9.0px;line-height:12px;color:#a8a8a8;font-style:italic;transform:scaleX(0.8905);transform-origin:0 0;">CoreDDR_TIP</span>
<span class="t" style="left:246.55px;top:385.0px;font-size:9.0px;line-height:12px;color:#a8a8a8;font-style:italic;transform:scaleX(0.8496);transform-origin:0 0;">2.1.100</span>
<span class="t" style="left:29.65px;top:396.2px;font-size:9.0px;line-height:12px;color:#000;transform:scaleX(0.8783);transform-origin:0 0;">CoreDDR_TIP</span>
<span class="t" style="left:245.8px;top:396.2px;font-size:9.0px;line-height:12px;color:#000;transform:scaleX(0.9281);transform-origin:0 0;">1.1.124 (*)</span>
<div style="left:366.8px;top:71px;width:13px;height:343.2px;background:#f7f7f7;"></div>
<div style="left:366.8px;top:71.6px;width:12.6px;height:12px;background:#f0f0f0;"></div>
<svg style="left:0;top:0" width="900" height="569"><rect x="366.8" y="71" width="13" height="1.2" fill="#696969"/><rect x="378.6" y="71" width="1.2" height="12.6" fill="#696969"/><rect x="366.8" y="82.6" width="13" height="1.2" fill="#696969"/></svg>
<svg style="left:370px;top:75.4px;" width="7" height="5" viewBox="0 0 7 5"><path d="M0.3 3.8 H6.3 L3.3 0.5 Z" fill="#111"/></svg>
<div style="left:366.8px;top:116px;width:12.4px;height:285px;background:#f0f0f0;"></div>
<svg style="left:0;top:0" width="900" height="569"><rect x="378.2" y="116" width="1.3" height="285" fill="#696969"/><rect x="366.8" y="400.2" width="12.6" height="1.2" fill="#696969"/><rect x="366.8" y="116" width="11.6" height="0.8" fill="#fff"/></svg>
<div style="left:366.8px;top:401.6px;width:12.6px;height:12.4px;background:#f0f0f0;"></div>
<svg style="left:0;top:0" width="900" height="569"><rect x="378.4" y="401.4" width="1.2" height="12.8" fill="#696969"/><rect x="366.8" y="413" width="12.8" height="1.2" fill="#696969"/></svg>
<svg style="left:370px;top:405.4px;" width="7" height="5" viewBox="0 0 7 5"><path d="M0.3 0.5 H6.3 L3.3 3.8 Z" fill="#111"/></svg>
<div style="left:0px;top:419px;width:380px;height:114.2px;background:#fff;"></div>
<svg style="left:0;top:0" width="900" height="569"><rect x="0" y="418.8" width="380" height="1.4" fill="#696969"/></svg>
<span class="t" style="left:0.5px;top:422.7px;font-size:8.5px;line-height:12px;color:#000;font-weight:bold;transform:scaleX(1.0103);transform-origin:0 0;">Description:</span>
<span class="t" style="left:51.3px;top:422.7px;font-size:8.5px;line-height:12px;color:#000;transform:scaleX(0.9172);transform-origin:0 0;">PolarFireSoC MSS System (Pre-production)</span>
<svg style="left:36.4px;top:536.7px;" width="14" height="14" viewBox="0 0 14 14"><defs><linearGradient id="wg" x1="0" y1="0" x2="0" y2="1"><stop offset="0" stop-color="#ffec10"/><stop offset="1" stop-color="#eda508"/></linearGradient></defs>
<path d="M6.8 0.9 L13.2 12.6 H0.4 Z" fill="url(#wg)" stroke="#d9c060" stroke-width="0.7" stroke-linejoin="round"/>
<path d="M6.8 4.4 V9.2" stroke="#1a1a1a" stroke-width="1.5"/><circle cx="6.8" cy="10.9" r="0.85" fill="#1a1a1a"/></svg>
<div style="left:95.6px;top:535.6px;width:110.8px;height:15.6px;background:#ffff00;"></div>
<span class="t" style="left:107.9px;top:537.2px;font-size:8.5px;line-height:12px;color:#00128c;transform:scaleX(0.9389);transform-origin:0 0;text-decoration:underline;text-underline-offset:1px;text-decoration-thickness:0.8px;">New cores are available</span>
<div style="left:251px;top:535.8px;width:81.4px;height:14.8px;background:#f0f0f0;"></div>
<svg style="left:0;top:0" width="900" height="569"><rect x="251" y="535.8" width="81.4" height="1" fill="#fff"/><rect x="251" y="535.8" width="1" height="14.8" fill="#fff"/><rect x="251" y="549.2" width="81.4" height="1.4" fill="#696969"/><rect x="331.0" y="535.8" width="1.4" height="14.8" fill="#696969"/><rect x="252" y="548.4" width="79.0" height="0.8" fill="#b4b4b4"/><rect x="330.2" y="536.8" width="0.8" height="12.4" fill="#b4b4b4"/></svg>
<span class="t" style="left:254.4px;top:537.6px;font-size:8.5px;line-height:12px;color:#000;transform:scaleX(0.9451);transform-origin:0 0;">Download them now!</span>
<svg style="left:0;top:0" width="900" height="569"><rect x="0" y="553.6" width="381" height="1.3" fill="#696969"/><rect x="0" y="554.4" width="0.8" height="12" fill="#fff"/><rect x="54.2" y="554.4" width="1.3" height="12.6" fill="#696969"/><rect x="0.6" y="566" width="55.0" height="1.3" fill="#696969"/></svg>
<span class="t" style="left:4.4px;top:554.8px;font-size:8.5px;line-height:12px;color:#000;transform:scaleX(0.9097);transform-origin:0 0;">Design Flow</span>
<svg style="left:0;top:0" width="900" height="569"><rect x="57.4" y="554.4" width="0.8" height="12" fill="#fff"/><rect x="132.2" y="554.4" width="1.3" height="12.6" fill="#696969"/><rect x="58.0" y="566" width="75.6" height="1.3" fill="#696969"/></svg>
<span class="t" style="left:63.9px;top:554.8px;font-size:8.5px;line-height:12px;color:#000;transform:scaleX(0.9266);transform-origin:0 0;">Design Hierarchy</span>
<svg style="left:0;top:0" width="900" height="569"><rect x="135.6" y="554.4" width="0.8" height="12" fill="#fff"/><rect x="215.4" y="554.4" width="1.3" height="12.6" fill="#696969"/><rect x="136.2" y="566" width="80.6" height="1.3" fill="#696969"/></svg>
<span class="t" style="left:142.15px;top:554.8px;font-size:8.5px;line-height:12px;color:#000;transform:scaleX(0.9172);transform-origin:0 0;">Stimulus Hierarchy</span>
<div style="left:217px;top:552.6px;width:44px;height:16.4px;background:#f0f0f0;"></div>
<svg style="left:0;top:0" width="900" height="569"><rect x="259.8" y="552.6" width="1.2" height="16.4" fill="#696969"/><rect x="217" y="552.6" width="0.8" height="16.4" fill="#fff"/></svg>
<span class="t" style="left:225.25px;top:556.0px;font-size:8.5px;line-height:12px;color:#000;transform:scaleX(0.9649);transform-origin:0 0;">Catalog</span>
<svg style="left:0;top:0" width="900" height="569"><rect x="261.4" y="554.4" width="0.8" height="12" fill="#fff"/><rect x="293.6" y="554.4" width="1.3" height="12.6" fill="#696969"/><rect x="262.0" y="566" width="33.0" height="1.3" fill="#696969"/></svg>
<span class="t" style="left:270.0px;top:554.8px;font-size:8.5px;line-height:12px;color:#000;transform:scaleX(0.9015);transform-origin:0 0;">Files</span>
<svg style="left:0;top:0" width="900" height="569"><rect x="295.6" y="554.4" width="0.8" height="12" fill="#fff"/><rect x="362.4" y="554.4" width="1.3" height="12.6" fill="#696969"/><rect x="296.2" y="566" width="67.6" height="1.3" fill="#696969"/></svg>
<span class="t" style="left:303.1px;top:554.8px;font-size:8.5px;line-height:12px;color:#000;transform:scaleX(0.9281);transform-origin:0 0;">HDL Templates</span>
<svg style="left:0;top:0" width="900" height="569"><rect x="381.2" y="56" width="1.2" height="498" fill="#f7f7f7"/><rect x="385" y="41.4" width="515" height="1" fill="#fbfbfb"/><rect x="381" y="55" width="519" height="1" fill="#fcfcfc"/><rect x="385" y="41.4" width="1" height="14" fill="#fbfbfb"/></svg>
<span class="t" style="left:399.5px;top:43.4px;font-size:8.5px;line-height:12px;color:#000;transform:scaleX(0.9811);transform-origin:0 0;">Reports</span>
<svg style="left:441.0px;top:45.6px;" width="7" height="8" viewBox="0 0 7 8"><rect x="2" y="0.7" width="3.6" height="3.8" fill="none" stroke="#000" stroke-width="1.05"/><rect x="0.55" y="3" width="3.6" height="3.8" fill="#f0f0f0" stroke="#000" stroke-width="1.05"/></svg>
<svg style="left:451.59999999999997px;top:45.6px;" width="8" height="7" viewBox="0 0 8 7"><path d="M0.7 0.6 L6.3 5.4 M6.3 0.6 L0.7 5.4" stroke="#111" stroke-width="1.25"/></svg>
<svg style="left:0;top:0" width="900" height="569"><rect x="469.6" y="41.8" width="1.5" height="13.6" fill="#8a8a8a"/></svg>
<span class="t" style="left:487.1px;top:43.4px;font-size:8.5px;line-height:12px;color:#000;transform:scaleX(0.9433);transform-origin:0 0;">PCIe_RP_Top_derived_constraints.sdc</span>
<svg style="left:639.0px;top:45.6px;" width="7" height="8" viewBox="0 0 7 8"><rect x="2" y="0.7" width="3.6" height="3.8" fill="none" stroke="#000" stroke-width="1.05"/><rect x="0.55" y="3" width="3.6" height="3.8" fill="#f0f0f0" stroke="#000" stroke-width="1.05"/></svg>
<svg style="left:649.6px;top:45.6px;" width="8" height="7" viewBox="0 0 8 7"><path d="M0.7 0.6 L6.3 5.4 M6.3 0.6 L0.7 5.4" stroke="#111" stroke-width="1.25"/></svg>
<svg style="left:0;top:0" width="900" height="569"><rect x="667.4" y="41.8" width="1.5" height="13.6" fill="#8a8a8a"/></svg>
<span class="t" style="left:685.35px;top:43.4px;font-size:8.5px;line-height:12px;color:#000;transform:scaleX(0.9396);transform-origin:0 0;">Constraint Manager</span>
<svg style="left:769.0px;top:45.6px;" width="7" height="8" viewBox="0 0 7 8"><rect x="2" y="0.7" width="3.6" height="3.8" fill="none" stroke="#000" stroke-width="1.05"/><rect x="0.55" y="3" width="3.6" height="3.8" fill="#f0f0f0" stroke="#000" stroke-width="1.05"/></svg>
<svg style="left:779.4000000000001px;top:45.6px;" width="8" height="7" viewBox="0 0 8 7"><path d="M0.7 0.6 L6.3 5.4 M6.3 0.6 L0.7 5.4" stroke="#111" stroke-width="1.25"/></svg>
<svg style="left:0;top:0" width="900" height="569"><rect x="797.4" y="41.8" width="1.5" height="13.6" fill="#8a8a8a"/></svg>
<span class="t" style="left:821.1px;top:43.4px;font-size:8.5px;line-height:12px;color:#000;transform:scaleX(0.9183);transform-origin:0 0;">PCIe_RP_Top</span>
<svg style="left:877.0px;top:45.6px;" width="7" height="8" viewBox="0 0 7 8"><rect x="2" y="0.7" width="3.6" height="3.8" fill="none" stroke="#000" stroke-width="1.05"/><rect x="0.55" y="3" width="3.6" height="3.8" fill="#f0f0f0" stroke="#000" stroke-width="1.05"/></svg>
<svg style="left:887.2px;top:45.6px;" width="8" height="7" viewBox="0 0 8 7"><path d="M0.7 0.6 L6.3 5.4 M6.3 0.6 L0.7 5.4" stroke="#111" stroke-width="1.25"/></svg>
<svg style="left:807.6px;top:42.5px" width="12" height="12" viewBox="0 0 12 12"><defs><linearGradient id="sdg" x1="0" y1="0" x2="1" y2="1"><stop offset="0" stop-color="#5b93d6"/><stop offset="1" stop-color="#1d55a8"/></linearGradient></defs><rect x="0" y="0" width="11.6" height="11.4" fill="url(#sdg)"/><text x="5.8" y="8.4" font-family="Liberation Sans, sans-serif" font-size="7.4" font-weight="bold" font-style="italic" fill="#fff" text-anchor="middle" letter-spacing="-0.4">SD</text></svg>
<svg style="left:0;top:0" width="900" height="569"><rect x="392.3" y="81.6" width="1" height="472.4" fill="#fcfcfc"/><rect x="392.3" y="81.6" width="508" height="1" fill="#fcfcfc"/><rect x="393.4" y="66.6" width="1" height="14.6" fill="#fbfbfb"/><rect x="393.4" y="66.6" width="74.6" height="1" fill="#fbfbfb"/><rect x="469.4" y="67.6" width="211" height="1" fill="#f8f8f8"/></svg>
<span class="t" style="left:395.1px;top:68.8px;font-size:8.5px;line-height:12px;color:#000;transform:scaleX(0.9474);transform-origin:0 0;">Design Initialization</span>
<svg style="left:0;top:0" width="900" height="569"><rect x="467.6" y="67.6" width="1.4" height="13.4" fill="#8a8a8a"/></svg>
<span class="t" style="left:473.5px;top:68.8px;font-size:8.5px;line-height:12px;color:#000;transform:scaleX(0.9043);transform-origin:0 0;">uPROM</span>
<svg style="left:0;top:0" width="900" height="569"><rect x="506" y="67.6" width="1.4" height="13.4" fill="#8a8a8a"/></svg>
<span class="t" style="left:516.15px;top:68.8px;font-size:8.5px;line-height:12px;color:#000;transform:scaleX(0.8787);transform-origin:0 0;">sNVM</span>
<span class="t" style="left:549.75px;top:68.8px;font-size:8.5px;line-height:12px;color:#000;transform:scaleX(0.9500);transform-origin:0 0;">SPI Flash*</span>
<span class="t" style="left:595.5px;top:68.8px;font-size:8.5px;line-height:12px;color:#000;transform:scaleX(0.8959);transform-origin:0 0;">Fabric RAMs</span>
<svg style="left:0;top:0" width="900" height="569"><rect x="643.6" y="67.6" width="1.4" height="13.4" fill="#8a8a8a"/></svg>
<span class="t" style="left:652.75px;top:68.8px;font-size:8.5px;line-height:12px;color:#000;transform:scaleX(0.8791);transform-origin:0 0;">eNVM</span>
<svg style="left:0;top:0" width="900" height="569"><rect x="680.4" y="67.6" width="1.4" height="13.4" fill="#8a8a8a"/></svg>
<svg style="left:0;top:0" width="900" height="569"><rect x="548.1" y="64.7" width="45.200000000000024" height="20.6" fill="none" stroke="#ec1c2c" stroke-width="3.4"/></svg>
<div style="left:397px;top:91px;width:55.4px;height:16.6px;background:#f0f0f0;"></div>
<svg style="left:0;top:0" width="900" height="569"><rect x="397" y="91" width="55.4" height="1" fill="#fff"/><rect x="397" y="91" width="1" height="16.6" fill="#fff"/><rect x="397" y="106.2" width="55.4" height="1.4" fill="#696969"/><rect x="451.0" y="91" width="1.4" height="16.6" fill="#696969"/><rect x="398" y="105.4" width="53.0" height="0.8" fill="#b4b4b4"/><rect x="450.2" y="92" width="0.8" height="14.2" fill="#b4b4b4"/></svg>
<span class="t" style="left:414.4px;top:93.8px;font-size:8.5px;line-height:12px;color:#000;transform:scaleX(0.9412);transform-origin:0 0;">Apply</span>
<div style="left:457px;top:91px;width:55.4px;height:16.6px;background:#f0f0f0;"></div>
<svg style="left:0;top:0" width="900" height="569"><rect x="457" y="91" width="55.4" height="1" fill="#fff"/><rect x="457" y="91" width="1" height="16.6" fill="#fff"/><rect x="457" y="106.2" width="55.4" height="1.4" fill="#696969"/><rect x="511.0" y="91" width="1.4" height="16.6" fill="#696969"/><rect x="458" y="105.4" width="53.0" height="0.8" fill="#b4b4b4"/><rect x="510.2" y="92" width="0.8" height="14.2" fill="#b4b4b4"/></svg>
<span class="t" style="left:470.5px;top:93.8px;font-size:8.5px;line-height:12px;color:#000;transform:scaleX(0.9369);transform-origin:0 0;">Discard</span>
<div style="left:517px;top:91px;width:55.4px;height:16.6px;background:#f0f0f0;"></div>
<svg style="left:0;top:0" width="900" height="569"><rect x="517" y="91" width="55.4" height="1" fill="#fff"/><rect x="517" y="91" width="1" height="16.6" fill="#fff"/><rect x="517" y="106.2" width="55.4" height="1.4" fill="#696969"/><rect x="571.0" y="91" width="1.4" height="16.6" fill="#696969"/><rect x="518" y="105.4" width="53.0" height="0.8" fill="#b4b4b4"/><rect x="570.2" y="92" width="0.8" height="14.2" fill="#b4b4b4"/></svg>
<span class="t" style="left:535.9px;top:93.8px;font-size:8.5px;line-height:12px;color:#000;transform:scaleX(0.9284);transform-origin:0 0;">Help</span>
<svg style="left:0;top:0" width="900" height="569"><rect x="397.40000000000003" y="113.1" width="93.4" height="23.79999999999999" fill="none" stroke="#ec1c2c" stroke-width="3.6"/></svg>
<div style="left:403.6px;top:121.9px;width:8.8px;height:8.6px;background:#fff;"></div>
<svg style="left:0;top:0" width="900" height="569"><rect x="403.6" y="121.9" width="8.8" height="1.2" fill="#707070"/><rect x="403.6" y="121.9" width="1.2" height="8.6" fill="#707070"/></svg>
<svg style="left:405.4px;top:123.6px;" width="7" height="7" viewBox="0 0 7 7"><path d="M0.7 2.4 L2.4 4.3 L5.3 0.9" fill="none" stroke="#000" stroke-width="1.3"/></svg>
<span class="t" style="left:416.2px;top:120.5px;font-size:8.5px;line-height:12px;color:#000;transform:scaleX(0.9505);transform-origin:0 0;">Enable Auto Update</span>
<span class="t" style="left:403.35px;top:140.9px;font-size:8.5px;line-height:12px;color:#000;transform:scaleX(0.9076);transform-origin:0 0;">SPI Flash memory size:</span>
<div style="left:492.2px;top:139.4px;width:49px;height:13.2px;background:#fff;"></div>
<svg style="left:0;top:0" width="900" height="569"><rect x="492.2" y="139.2" width="49" height="1.4" fill="#7a7a7a"/><rect x="492.2" y="139.2" width="1.4" height="13.4" fill="#7a7a7a"/><rect x="493" y="152" width="48.2" height="0.8" fill="#e4e4e4"/><rect x="540.6" y="140.6" width="0.7" height="12" fill="#e4e4e4"/></svg>
<div style="left:529.4px;top:140.8px;width:11.2px;height:11.4px;background:#f0f0f0;"></div>
<svg style="left:0;top:0" width="900" height="569"><rect x="539.6" y="140.6" width="1.3" height="11.8" fill="#696969"/><rect x="529.4" y="151" width="11.4" height="1.3" fill="#696969"/><rect x="529.4" y="140.8" width="0.8" height="10.2" fill="#fff"/><rect x="529.4" y="140.8" width="10.2" height="0.8" fill="#fff"/></svg>
<svg style="left:531.2px;top:144.4px;" width="7" height="5" viewBox="0 0 7 5"><path d="M0.3 0.5 H6.3 L3.3 3.9 Z" fill="#111"/></svg>
<span class="t" style="left:495.3px;top:140.9px;font-size:8.5px;line-height:12px;color:#000;transform:scaleX(0.8743);transform-origin:0 0;">128</span>
<span class="t" style="left:545.9px;top:140.9px;font-size:8.5px;line-height:12px;color:#000;transform:scaleX(0.8293);transform-origin:0 0;">MB</span>
<svg style="left:0;top:0" width="900" height="569"><rect x="403.8" y="164" width="123.8" height="0.8" fill="#a6a6a6"/><rect x="404.6" y="164.8" width="123.8" height="0.8" fill="#fdfdfd"/><rect x="403.8" y="164" width="0.8" height="375.6" fill="#a6a6a6"/><rect x="404.6" y="164.8" width="0.8" height="374.0" fill="#fdfdfd"/><rect x="403.8" y="538.8" width="123.8" height="0.8" fill="#a6a6a6"/><rect x="403.8" y="539.6" width="123.8" height="0.8" fill="#fdfdfd"/><rect x="526.8" y="164" width="0.8" height="375.6" fill="#a6a6a6"/><rect x="527.6" y="164" width="0.8" height="376.4" fill="#fdfdfd"/></svg>
<div style="left:408.4px;top:162px;width:58.80000000000001px;height:5px;background:#f0f0f0;"></div>
<span class="t" style="left:409.4px;top:158.4px;font-size:8.5px;line-height:12px;color:#000;transform:scaleX(0.9387);transform-origin:0 0;">Usage statistics</span>
<svg style="left:0;top:0" width="900" height="569"><rect x="533.2" y="164" width="371.8" height="0.8" fill="#a6a6a6"/><rect x="534.0" y="164.8" width="371.8" height="0.8" fill="#fdfdfd"/><rect x="533.2" y="164" width="0.8" height="375.6" fill="#a6a6a6"/><rect x="534.0" y="164.8" width="0.8" height="374.0" fill="#fdfdfd"/><rect x="533.2" y="538.8" width="371.8" height="0.8" fill="#a6a6a6"/><rect x="533.2" y="539.6" width="371.8" height="0.8" fill="#fdfdfd"/></svg>
<div style="left:538.5px;top:162px;width:61.5px;height:5px;background:#f0f0f0;"></div>
<span class="t" style="left:539.75px;top:158.4px;font-size:8.5px;line-height:12px;color:#000;transform:scaleX(0.8958);transform-origin:0 0;">SPI Flash Clients</span>
<span class="t" style="left:411.8px;top:180.0px;font-size:8.5px;line-height:12px;color:#000;transform:scaleX(0.9241);transform-origin:0 0;">Available memory (KB):131071</span>
<span class="t" style="left:411.3px;top:194.4px;font-size:8.5px;line-height:12px;color:#000;transform:scaleX(0.9122);transform-origin:0 0;">Used memory (KB):</span>
<span class="t" style="left:515.35px;top:194.4px;font-size:8.5px;line-height:12px;color:#000;transform:scaleX(1.0715);transform-origin:0 0;">0</span>
<span class="t" style="left:411.3px;top:208.5px;font-size:8.5px;line-height:12px;color:#000;transform:scaleX(0.9299);transform-origin:0 0;">Free memory (KB) :</span>
<span class="t" style="left:494.2px;top:208.5px;font-size:8.5px;line-height:12px;color:#000;transform:scaleX(0.9273);transform-origin:0 0;">131071</span>
<svg style="left:425px;top:234px" width="84" height="82"><circle cx="40.9" cy="40.9" r="36.6" fill="#ff00ff" stroke="#3a1a3a" stroke-width="0.8"/><path d="M41 41.3 H77.6" stroke="#1a001a" stroke-width="1.1"/></svg>
<svg style="left:0;top:0" width="900" height="569"><rect x="440.8" y="507.1" width="8.2" height="8.2" fill="#0000ff"/><rect x="448.2" y="507.1" width="0.9" height="8.2" fill="#050520"/><rect x="440.8" y="514.5" width="8.2" height="0.9" fill="#050520"/><rect x="440.8" y="517.0" width="8.2" height="8.3" fill="#ff00ff"/><rect x="448.2" y="517" width="0.9" height="8.3" fill="#200520"/><rect x="440.8" y="524.5" width="8.2" height="0.9" fill="#200520"/></svg>
<span class="t" style="left:465.6px;top:505.9px;font-size:8.5px;line-height:12px;color:#000;transform:scaleX(0.9254);transform-origin:0 0;">Used space</span>
<span class="t" style="left:465.6px;top:515.7px;font-size:8.5px;line-height:12px;color:#000;transform:scaleX(0.9437);transform-origin:0 0;">Free space</span>
<div style="left:541.4px;top:177.4px;width:60px;height:19.8px;background:#f0f0f0;"></div>
<svg style="left:0;top:0" width="900" height="569"><rect x="541.4" y="177.4" width="60" height="1" fill="#fff"/><rect x="541.4" y="177.4" width="1" height="19.8" fill="#fff"/><rect x="541.4" y="195.8" width="60" height="1.4" fill="#696969"/><rect x="600.0" y="177.4" width="1.4" height="19.8" fill="#696969"/><rect x="542.4" y="195.0" width="57.6" height="0.8" fill="#b4b4b4"/><rect x="599.2" y="178.4" width="0.8" height="17.4" fill="#b4b4b4"/></svg>
<span class="t" style="left:560.0px;top:181.8px;font-size:8.5px;line-height:12px;color:#000;transform:scaleX(1.0442);transform-origin:0 0;">Add...</span>
<div style="left:601.4px;top:177.4px;width:9.2px;height:19.8px;background:#f0f0f0;"></div>
<svg style="left:0;top:0" width="900" height="569"><rect x="609.6" y="177.4" width="1" height="19.8" fill="#c8c8c8"/><rect x="601.4" y="196" width="9.2" height="1" fill="#c8c8c8"/></svg>
<svg style="left:602.4px;top:184.6px;" width="7" height="5" viewBox="0 0 7 5"><path d="M0.3 0.5 H6.3 L3.3 3.8 Z" fill="#111"/></svg>
<div style="left:615px;top:177.4px;width:69px;height:20px;background:#f0f0f0;"></div>
<svg style="left:0;top:0" width="900" height="569"><rect x="615" y="177.4" width="69" height="1" fill="#fff"/><rect x="615" y="177.4" width="1" height="20" fill="#fff"/><rect x="615" y="196.0" width="69" height="1.4" fill="#696969"/><rect x="682.6" y="177.4" width="1.4" height="20" fill="#696969"/><rect x="616" y="195.2" width="66.6" height="0.8" fill="#b4b4b4"/><rect x="681.8" y="178.4" width="0.8" height="17.6" fill="#b4b4b4"/></svg>
<span class="t" style="left:636.25px;top:181.8px;font-size:8.5px;line-height:12px;color:#8c8c8c;transform:scaleX(1.0952);transform-origin:0 0;">Edit...</span>
<div style="left:688px;top:177.4px;width:68.6px;height:20px;background:#f0f0f0;"></div>
<svg style="left:0;top:0" width="900" height="569"><rect x="688" y="177.4" width="68.6" height="1" fill="#fff"/><rect x="688" y="177.4" width="1" height="20" fill="#fff"/><rect x="688" y="196.0" width="68.6" height="1.4" fill="#696969"/><rect x="755.2" y="177.4" width="1.4" height="20" fill="#696969"/><rect x="689" y="195.2" width="66.2" height="0.8" fill="#b4b4b4"/><rect x="754.4" y="178.4" width="0.8" height="17.6" fill="#b4b4b4"/></svg>
<span class="t" style="left:709.5px;top:181.8px;font-size:8.5px;line-height:12px;color:#8c8c8c;transform:scaleX(0.9916);transform-origin:0 0;">Delete</span>
<div style="left:542px;top:202.6px;width:360px;height:290.6px;background:#fff;"></div>
<div style="left:543.4px;top:203.8px;width:358px;height:38.4px;background:#f0f0f0;"></div>
<svg style="left:0;top:0" width="900" height="569"><rect x="542" y="202.4" width="360" height="1.5" fill="#747474"/><rect x="541.8" y="202.4" width="1.5" height="290.8" fill="#747474"/><rect x="543.4" y="241.4" width="358" height="1.5" fill="#747474"/><rect x="585.4" y="203.8" width="1.4" height="38" fill="#747474"/><rect x="586.8" y="204.4" width="0.8" height="37" fill="#fdfdfd"/><rect x="718.6" y="203.8" width="1.4" height="38" fill="#747474"/><rect x="720.0" y="204.4" width="0.8" height="37" fill="#fdfdfd"/><rect x="851.8" y="203.8" width="1.4" height="38" fill="#747474"/><rect x="853.2" y="204.4" width="0.8" height="37" fill="#fdfdfd"/><rect x="895.8" y="203.8" width="1.4" height="38" fill="#747474"/><rect x="897.2" y="204.4" width="0.8" height="37" fill="#fdfdfd"/><rect x="543.4" y="204" width="358" height="0.8" fill="#fdfdfd"/></svg>
<span class="t" style="left:546.65px;top:217.4px;font-size:9.1px;line-height:12px;color:#000;transform:scaleX(1.0074);transform-origin:0 0;">Program</span>
<span class="t" style="left:640.85px;top:217.4px;font-size:9.1px;line-height:12px;color:#000;transform:scaleX(1.0086);transform-origin:0 0;">Name</span>
<span class="t" style="left:778.4px;top:217.4px;font-size:9.1px;line-height:12px;color:#000;transform:scaleX(0.8898);transform-origin:0 0;">Type</span>
<span class="t" style="left:863.65px;top:217.4px;font-size:9.1px;line-height:12px;color:#000;transform:scaleX(0.9814);transform-origin:0 0;">Index</span>
<div style="left:541.4px;top:506px;width:129.8px;height:11.2px;background:#ffff00;border:1px solid #111;"></div>
<span class="t" style="left:543.75px;top:505.8px;font-size:8.5px;line-height:12px;color:#000;transform:scaleX(0.9412);transform-origin:0 0;">SPI Bitstream for Recovery/Golden</span>
<div style="left:541.4px;top:521.6px;width:129.8px;height:11.4px;background:#008000;border:1px solid #111;"></div>
<span class="t" style="left:543.75px;top:521.6px;font-size:8.5px;line-height:12px;color:#000;transform:scaleX(0.9509);transform-origin:0 0;">SPI Bitstream for Auto Update</span>
<svg style="left:0;top:0" width="900" height="569"><rect x="392" y="553.6" width="510" height="1" fill="#b8b8b8"/><rect x="392" y="554.6" width="510" height="1.3" fill="#696969"/></svg>
<div style="left:384.4px;top:556.4px;width:520px;height:12.6px;background:#f6f6f6;"></div>
<div style="left:384.4px;top:556.4px;width:11.4px;height:12.6px;background:#f0f0f0;"></div>
<svg style="left:0;top:0" width="900" height="569"><rect x="394.6" y="556.4" width="1.2" height="12.6" fill="#696969"/><rect x="384.4" y="556.4" width="0.8" height="12.6" fill="#fff"/><rect x="384.4" y="556.4" width="11" height="0.8" fill="#fff"/></svg>
<svg style="left:387.2px;top:558.8px;" width="5" height="7" viewBox="0 0 5 7"><path d="M3.8 0.3 V6.3 L0.5 3.3 Z" fill="#111"/></svg>
<div style="left:396px;top:556.8px;width:510px;height:11px;background:#f0f0f0;"></div>
<svg style="left:0;top:0" width="900" height="569"><rect x="384.4" y="567.4" width="520" height="1.4" fill="#696969"/><rect x="396" y="556.4" width="510" height="0.8" fill="#fff"/></svg>
</body></html>
